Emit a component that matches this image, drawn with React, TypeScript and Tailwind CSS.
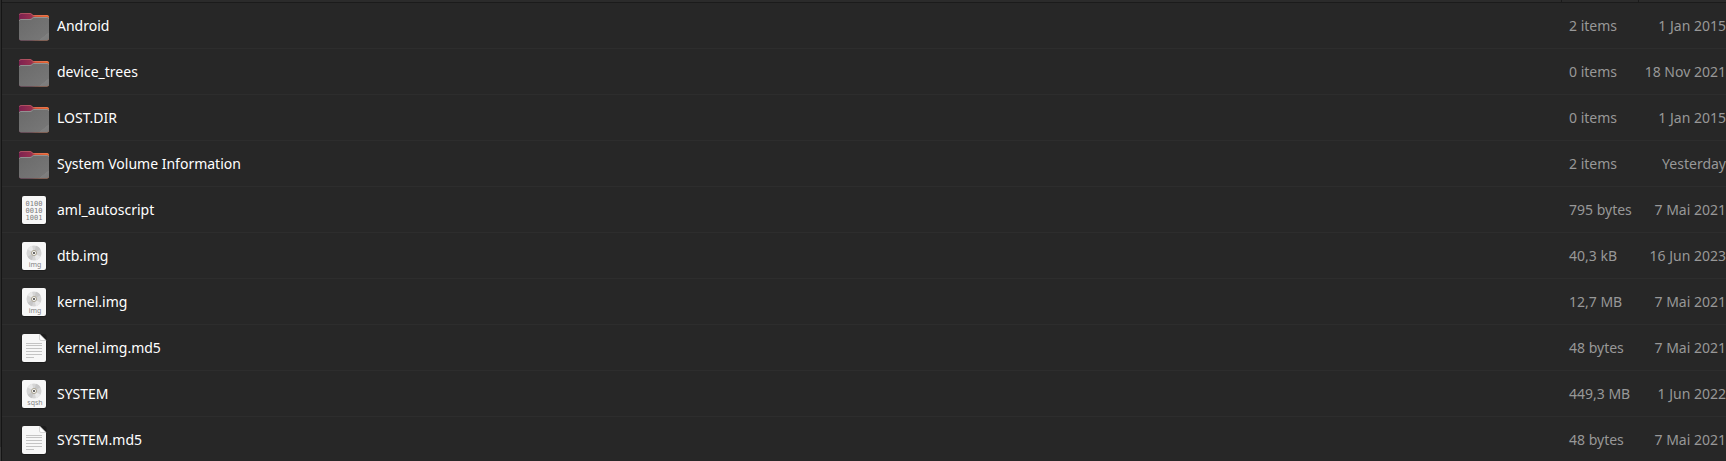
type IconKind = "folder" | "binary" | "img" | "sqsh" | "text";

type Entry = {
  name: string;
  icon: IconKind;
  size: string;
  modified: string;
};

const entries: Entry[] = [
  { name: "Android", icon: "folder", size: "2 items", modified: "1 Jan 2015" },
  { name: "device_trees", icon: "folder", size: "0 items", modified: "18 Nov 2021" },
  { name: "LOST.DIR", icon: "folder", size: "0 items", modified: "1 Jan 2015" },
  { name: "System Volume Information", icon: "folder", size: "2 items", modified: "Yesterday" },
  { name: "aml_autoscript", icon: "binary", size: "795 bytes", modified: "7 Mai 2021" },
  { name: "dtb.img", icon: "img", size: "40,3 kB", modified: "16 Jun 2023" },
  { name: "kernel.img", icon: "img", size: "12,7 MB", modified: "7 Mai 2021" },
  { name: "kernel.img.md5", icon: "text", size: "48 bytes", modified: "7 Mai 2021" },
  { name: "SYSTEM", icon: "sqsh", size: "449,3 MB", modified: "1 Jun 2022" },
  { name: "SYSTEM.md5", icon: "text", size: "48 bytes", modified: "7 Mai 2021" },
];

export default function App() {
  return (
    <main className="flex h-screen overflow-hidden bg-[#272727] font-['Noto_Sans',sans-serif] text-sm">
      {/* edge of the sidebar */}
      <div className="flex w-0.5 flex-none flex-col border-r border-[#151515] bg-[#2b2b2b]">
        <div className="mt-auto h-3.5 bg-[#3a3a3a]" />
      </div>

      <div className="min-w-0 flex-1">
        {/* bottom edge of the column headers */}
        <div className="flex h-[3px] border-b border-[#1b1b1b] bg-[#2b2b2b]">
          <div className="flex-1" />
          <div className="w-[77px] border-l border-[#1b1b1b]" />
          <div className="w-[88px] border-l border-[#1b1b1b]" />
        </div>

        <table className="w-full table-fixed border-separate border-spacing-0" aria-label="Files">
          <colgroup>
            <col />
            <col className="w-[77px]" />
            <col className="w-[88px]" />
          </colgroup>
          <tbody>
            {entries.map((e) => (
              <tr key={e.name} className="h-[46px] whitespace-nowrap text-[#989898]">
                <td className="border-b border-[#2d2d2d] pl-4">
                  <div className="flex items-center gap-[7px] text-white">
                    <FileIcon kind={e.icon} />
                    {e.name}
                  </div>
                </td>
                <td className="border-b border-[#2d2d2d] pl-2">{e.size}</td>
                <td className="border-b border-[#2d2d2d] text-right">{e.modified}</td>
              </tr>
            ))}
          </tbody>
        </table>
      </div>
    </main>
  );
}

function FileIcon({ kind }: { kind: IconKind }) {
  return (
    <svg className="h-8 w-8 flex-none" viewBox="0 0 32 32" aria-hidden>
      {kind === "folder" ? <Folder /> : <Page folded={kind === "text"} />}
      {kind === "binary" && <Digits />}
      {kind === "text" && <Lines />}
      {(kind === "img" || kind === "sqsh") && <Disc label={kind} />}
    </svg>
  );
}

function Folder() {
  return (
    <>
      <defs>
        <linearGradient id="folder-back" x1="0" x2="1">
          <stop offset="0" stopColor="#7d2150" />
          <stop offset="0.42" stopColor="#98304e" />
          <stop offset="0.55" stopColor="#cf5238" />
          <stop offset="1" stopColor="#e8662c" />
        </linearGradient>
        <linearGradient id="folder-front" x1="0" y1="0" x2="1" y2="1">
          <stop offset="0" stopColor="#6a6a6a" />
          <stop offset="0.82" stopColor="#767676" />
          <stop offset="0.83" stopColor="#7f7f7f" />
          <stop offset="1" stopColor="#7a7a7a" />
        </linearGradient>
      </defs>
      <path
        d="M3 3h9c.8 0 1.300.3 1.800.8l.6.6c.4.4.8.6 1.400.6H29a2 2 0 0 1 2 2v21.500a2 2 0 0 1-2 2H3a2 2 0 0 1-2-2V5a2 2 0 0 1 2-2z"
        fill="url(#folder-back)"
      />
      <path
        d="M1.500 5a1.500 1.500 0 0 1 1.500-1.500h9c.7 0 1.100.2 1.500.6l.7.7c.4.4.9.7 1.600.7H29c.9 0 1.500.6 1.500 1.500"
        fill="none"
        stroke="#f09a80"
        strokeOpacity="0.35"
      />
      <path
        d="M3 9h9c.8 0 1.300-.3 1.800-.8l.6-.5c.4-.4.8-.7 1.500-.7H29a2 2 0 0 1 2 2v19.500a2 2 0 0 1-2 2H3a2 2 0 0 1-2-2V11a2 2 0 0 1 2-2z"
        fill="url(#folder-front)"
      />
      <path
        d="M1.500 11c0-.9.6-1.500 1.500-1.500h9c.9 0 1.500-.3 2.100-.9l.6-.5c.4-.4.700-.6 1.300-.6H29c.9 0 1.500.6 1.500 1.500"
        fill="none"
        stroke="#929292"
      />
    </>
  );
}

function Page({ folded }: { folded: boolean }) {
  return (
    <>
      <rect x="3.500" y="2" width="25" height="29" rx="2.500" fill="#161616" opacity="0.6" />
      {folded ? (
        <>
          <path d="M6 2h15.500L28 8.500V28a2 2 0 0 1-2 2H6a2 2 0 0 1-2-2V4a2 2 0 0 1 2-2z" fill="#f7f7f7" />
          <path d="M21.500 2 28 8.500h-5a1.500 1.500 0 0 1-1.500-1.500z" fill="#fff" stroke="#c9c9c9" strokeWidth="0.7" />
        </>
      ) : (
        <rect x="4" y="2" width="24" height="28" rx="2" fill="#f7f7f7" />
      )}
    </>
  );
}

function Digits() {
  const rows = [
    { text: "0100", y: 12 },
    { text: "0010", y: 19 },
    { text: "1001", y: 26 },
  ];
  return (
    <g fill="#7c7c7c" fontFamily="DejaVu Sans Mono, monospace" fontSize="7" textAnchor="middle">
      {rows.map((r) => (
        <text key={r.text} x="16" y={r.y}>
          {r.text}
        </text>
      ))}
    </g>
  );
}

function Lines() {
  return (
    <path
      d="M8 11.500h16M8 13.500h16M8 16.500h16M8 19.500h16M8 22.500h16M8 25.500h8"
      stroke="#c4c4c4"
      fill="none"
    />
  );
}

function Disc({ label }: { label: string }) {
  return (
    <>
      <circle cx="16" cy="13" r="7.500" fill="#d5d5d5" />
      <path d="M16 13 9.500 9.200A7.500 7.500 0 0 1 14 5.800z" fill="#e9e9e9" />
      <path d="M16 13 22.500 16.800A7.500 7.500 0 0 1 18 20.200z" fill="#e9e9e9" />
      <path d="M16 13 18 5.800a7.500 7.500 0 0 1 4.500 3.400z" fill="#c6c6c6" />
      <path d="M16 13 14 20.200a7.500 7.500 0 0 1-4.500-3.400z" fill="#c6c6c6" />
      <circle cx="16" cy="13" r="2.500" fill="#fff" stroke="#a69f8b" />
      <circle cx="16" cy="13" r="1.100" fill="#444" />
      <text x="17" y="27" textAnchor="middle" fontFamily="Noto Sans, sans-serif" fontSize="7" fill="#858585">
        {label}
      </text>
    </>
  );
}
